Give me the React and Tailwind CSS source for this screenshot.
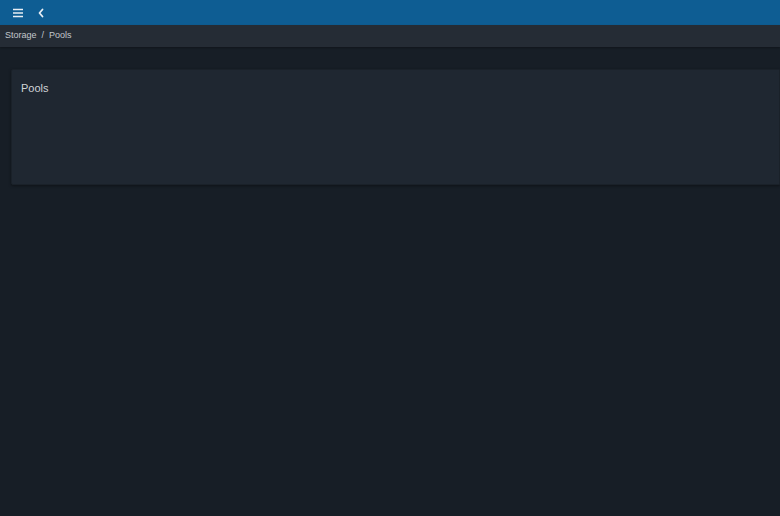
export default function App() {
  return (
    <div className="w-[780px] h-[516px] flex flex-col bg-[#171e26] overflow-hidden" style={{ fontFamily: '"Liberation Sans", Arial, sans-serif' }}>
      <div className="h-[25px] bg-[#0e5d93] flex items-center pl-[12px] gap-[13px] shrink-0">
        <svg width="12" height="10" viewBox="0 0 12 10" fill="none" stroke="#e8eef4" strokeWidth="1.6">
          <path d="M1 1.5h10M1 5h10M1 8.5h10" />
        </svg>
        <svg width="8" height="10" viewBox="0 0 8 10" fill="none" stroke="#e8eef4" strokeWidth="1.8" strokeLinecap="round" strokeLinejoin="round">
          <path d="M5.5 1.5 2.5 5l3 3.5" />
        </svg>
      </div>
      <div className="h-[22px] bg-[#252c35] flex items-center pl-[5px] text-[9px] text-[#c3c7cc] shrink-0 shadow-[0_1px_2px_rgba(0,0,0,0.3)]">
        <span>Storage</span>
        <span className="mx-[5px]">/</span>
        <span>Pools</span>
      </div>
      <div className="pt-[22px] pl-[11px]">
        <div className="h-[116px] bg-[#1f2731] rounded-l-[2px] border border-[#1a2129] shadow-[0_1px_3px_rgba(0,0,0,0.4)] pt-[10px] pl-[9px]">
          <div className="text-[11px] text-[#cfd3d7]">Pools</div>
        </div>
      </div>
    </div>
  );
}
